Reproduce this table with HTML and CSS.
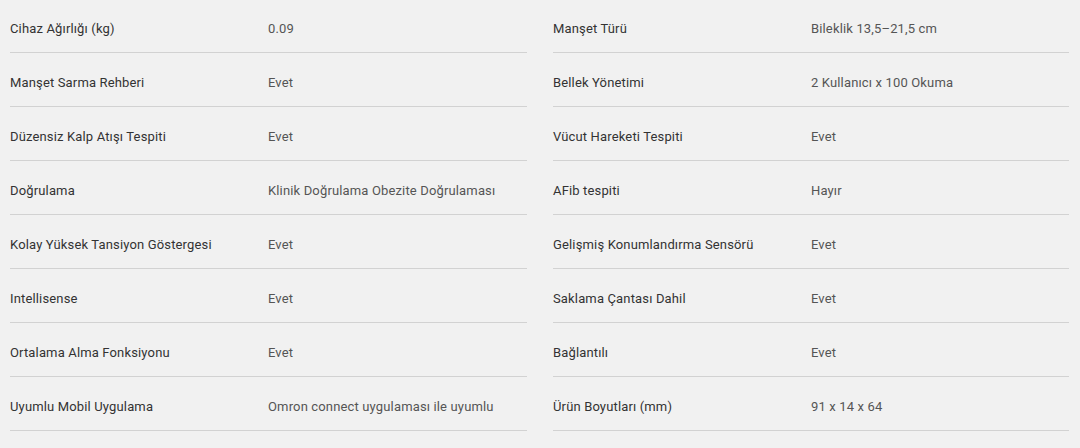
FILE: index.html
```html
<!DOCTYPE html>
<html lang="tr">
<head>
    <meta charset="UTF-8">
    <meta name="viewport" content="width=device-width, initial-scale=1">
    <title>Teknik Özellikler</title>
    <link rel="stylesheet" href="styles.css">
</head>
<body>
    <div class="specs">
        <dl class="spec-list">
            <div class="spec-row"><dt>Cihaz Ağırlığı (kg)</dt><dd>0.09</dd></div>
            <div class="spec-row"><dt>Manşet Sarma Rehberi</dt><dd>Evet</dd></div>
            <div class="spec-row"><dt>Düzensiz Kalp Atışı Tespiti</dt><dd>Evet</dd></div>
            <div class="spec-row"><dt>Doğrulama</dt><dd>Klinik Doğrulama Obezite Doğrulaması</dd></div>
            <div class="spec-row"><dt>Kolay Yüksek Tansiyon Göstergesi</dt><dd>Evet</dd></div>
            <div class="spec-row"><dt>Intellisense</dt><dd>Evet</dd></div>
            <div class="spec-row"><dt>Ortalama Alma Fonksiyonu</dt><dd>Evet</dd></div>
            <div class="spec-row"><dt>Uyumlu Mobil Uygulama</dt><dd>Omron connect uygulaması ile uyumlu</dd></div>
        </dl>
        <dl class="spec-list">
            <div class="spec-row"><dt>Manşet Türü</dt><dd>Bileklik 13,5–21,5 cm</dd></div>
            <div class="spec-row"><dt>Bellek Yönetimi</dt><dd>2 Kullanıcı x 100 Okuma</dd></div>
            <div class="spec-row"><dt>Vücut Hareketi Tespiti</dt><dd>Evet</dd></div>
            <div class="spec-row"><dt>AFib tespiti</dt><dd>Hayır</dd></div>
            <div class="spec-row"><dt>Gelişmiş Konumlandırma Sensörü</dt><dd>Evet</dd></div>
            <div class="spec-row"><dt>Saklama Çantası Dahil</dt><dd>Evet</dd></div>
            <div class="spec-row"><dt>Bağlantılı</dt><dd>Evet</dd></div>
            <div class="spec-row"><dt>Ürün Boyutları (mm)</dt><dd>91 x 14 x 64</dd></div>
        </dl>
    </div>
</body>
</html>
```

FILE: styles.css
```css
body { margin: 0; background: #f1f1f1; font-family: "Roboto", "Liberation Sans", sans-serif; font-size: 13px; }
.specs { display: grid; grid-template-columns: 517px 516px; column-gap: 26px; padding: 0 10px; margin-top: -1px; }
.spec-list { margin: 0; }
.spec-row { display: grid; grid-template-columns: 258px 1fr; padding: 22px 0 15px; line-height: 16px; letter-spacing: 0.15px; border-bottom: 1px solid #d2d2d2; }
.spec-row dt { color: #333; }
.spec-row dd { margin: 0; color: #555; }
```
